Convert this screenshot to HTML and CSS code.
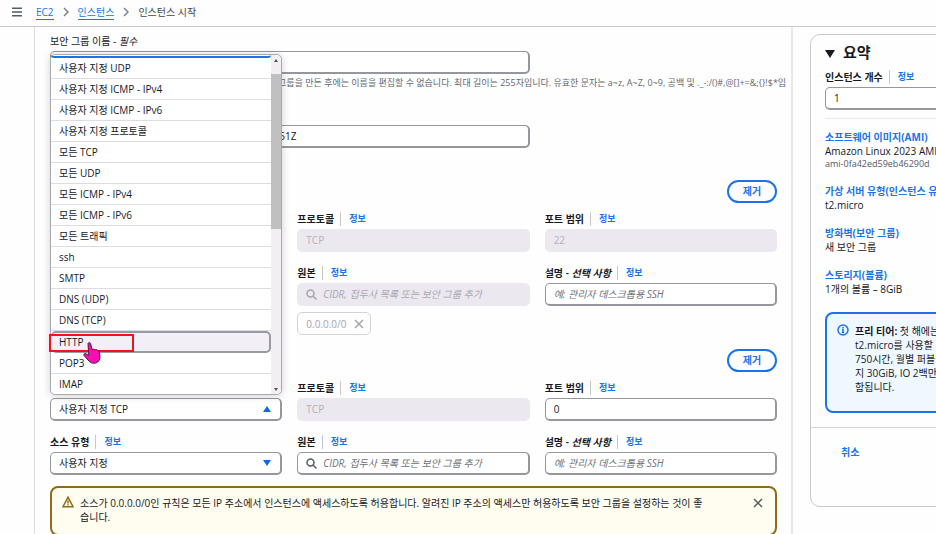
FILE: index.html
```html
<!DOCTYPE html>
<html lang="ko">

<head>
    <meta charset="UTF-8">
    <meta name="viewport" content="width=device-width, initial-scale=1.0">
    <title>인스턴스 시작 | EC2</title>
    <link rel="stylesheet" href="styles.css">
</head>

<body>

    <header class="topbar">
        <button class="menu-btn" aria-label="메뉴">
            <svg width="10" height="10" viewBox="0 0 10 10"><path d="M0 1.200h10M0 5h10M0 8.800h10" /></svg>
        </button>
        <nav class="breadcrumb">
            <a href="#">EC2</a>
            <svg width="6" height="10" viewBox="0 0 6 10"><path d="M1 1l4 4-4 4" /></svg>
            <a href="#">인스턴스</a>
            <svg width="6" height="10" viewBox="0 0 6 10"><path d="M1 1l4 4-4 4" /></svg>
            <span>인스턴스 시작</span>
        </nav>
    </header>

    <div class="layout">
        <div class="side"></div>

        <main class="content">
            <div class="field name-field">
                <div class="label"><label for="sg-name">보안 그룹 이름 - <i>필수</i></label></div>
                <input class="input wide" id="sg-name" type="text">
                <p class="hint">이 보안 그룹은 모든 네트워크 인터페이스에 추가됩니다. 보안 그룹을 만든 후에는 이름을 편집할 수 없습니다. 최대 길이는 255자입니다. 유효한 문자는 a~z, A~Z, 0~9, 공백 및 ._-:/()#,@[]+=&amp;;{}!$*입</p>
            </div>
            <div class="field desc-field">
                <div class="label covered"><label for="sg-desc">설명 - <i>필수</i></label></div>
                <input class="input wide" id="sg-desc" type="text" value="launch-wizard-1 created 2024-08-25T06:39:51.551Z">
            </div>

            <!-- 규칙 1 -->
            <section class="rule">
                <div class="rule-head"><button class="btn">제거</button></div>
                <div class="grid">
                    <div class="field covered">
                        <div class="label"><label for="type1">유형</label><a href="#">정보</a></div>
                        <select class="input" id="type1" disabled><option>ssh</option></select>
                    </div>
                    <div class="field">
                        <div class="label"><label for="proto1">프로토콜</label><a href="#">정보</a></div>
                        <input class="input" id="proto1" type="text" value="TCP" disabled>
                    </div>
                    <div class="field">
                        <div class="label"><label for="port1">포트 범위</label><a href="#">정보</a></div>
                        <input class="input" id="port1" type="text" value="22" disabled>
                    </div>
                    <div class="field covered">
                        <div class="label"><label for="src-type1">소스 유형</label><a href="#">정보</a></div>
                        <select class="input" id="src-type1"><option>위치 무관</option></select>
                    </div>
                    <div class="field">
                        <div class="label"><label for="src1">원본</label><a href="#">정보</a></div>
                        <div class="control search">
                            <svg class="search-icon" width="11" height="11" viewBox="0 0 11 11"><circle cx="4.5" cy="4.5" r="3.5" /><path d="M7 7l3.500 3.500" /></svg>
                            <input class="input" id="src1" type="text" placeholder="CIDR, 접두사 목록 또는 보안 그룹 추가" disabled>
                        </div>
                        <div class="token">0.0.0.0/0
                            <button aria-label="0.0.0.0/0 제거" disabled><svg width="10" height="10" viewBox="0 0 10 10"><path d="M1 1l8 8M9 1l-8 8" /></svg></button>
                        </div>
                    </div>
                    <div class="field">
                        <div class="label"><label for="desc1">설명 - <i>선택 사항</i></label><a href="#">정보</a></div>
                        <input class="input" id="desc1" type="text" placeholder="예: 관리자 데스크톱용 SSH">
                    </div>
                </div>
            </section>

            <!-- 규칙 2 -->
            <section class="rule">
                <div class="rule-head"><button class="btn">제거</button></div>
                <div class="grid">
                    <div class="field">
                        <div class="label covered"><label for="type2">유형</label><a href="#">정보</a></div>
                        <div class="control">
                            <select class="input" id="type2"><option>사용자 지정 TCP</option></select>
                            <svg class="arrow" width="8" height="6" viewBox="0 0 8 6"><path d="M4 0l4 6H0z" /></svg>
                            <div class="dropdown">
                                <ul class="options" role="listbox" aria-label="유형">
                                    <li class="current"></li>
                                    <li role="option">사용자 지정 UDP</li>
                                    <li role="option">사용자 지정 ICMP - IPv4</li>
                                    <li role="option">사용자 지정 ICMP - IPv6</li>
                                    <li role="option">사용자 지정 프로토콜</li>
                                    <li role="option">모든 TCP</li>
                                    <li role="option">모든 UDP</li>
                                    <li role="option">모든 ICMP - IPv4</li>
                                    <li role="option">모든 ICMP - IPv6</li>
                                    <li role="option">모든 트래픽</li>
                                    <li role="option">ssh</li>
                                    <li role="option">SMTP</li>
                                    <li role="option">DNS (UDP)</li>
                                    <li role="option">DNS (TCP)</li>
                                    <li role="option" class="hover">HTTP
                                        <span class="mark"></span>
                                        <svg class="hand" width="18" height="22" viewBox="0 0 18 22"><path d="M5 1.500C5.200 .4 7.300.3 7.600 1.500L9 7.600l1.500-.5 1.800.7 1.500-.2 1.200 1.200 1.300.5.700 5.500c0 3-1.500 5.700-4.500 6.300-3 .4-5-.2-6.500-2L1 13.500c-.8-1.500.8-2.500 2-1.700l2.800 1.700z" /></svg>
                                    </li>
                                    <li role="option">POP3</li>
                                    <li role="option">IMAP</li>
                                </ul>
                                <div class="scrollbar">
                                    <svg width="4" height="3" viewBox="0 0 4 3"><path d="M2 0l2 3H0z" /></svg>
                                    <div class="thumb"></div>
                                    <svg width="4" height="3" viewBox="0 0 4 3"><path d="M0 0h4L2 3z" /></svg>
                                </div>
                            </div>
                        </div>
                    </div>
                    <div class="field">
                        <div class="label"><label for="proto2">프로토콜</label><a href="#">정보</a></div>
                        <input class="input" id="proto2" type="text" value="TCP" disabled>
                    </div>
                    <div class="field">
                        <div class="label"><label for="port2">포트 범위</label><a href="#">정보</a></div>
                        <input class="input" id="port2" type="text" value="0">
                    </div>
                    <div class="field">
                        <div class="label"><label for="src-type2">소스 유형</label><a href="#">정보</a></div>
                        <div class="control">
                            <select class="input" id="src-type2"><option>사용자 지정</option></select>
                            <svg class="arrow" width="8" height="6" viewBox="0 0 8 6"><path d="M0 0h8L4 6z" /></svg>
                        </div>
                    </div>
                    <div class="field">
                        <div class="label"><label for="src2">원본</label><a href="#">정보</a></div>
                        <div class="control search">
                            <svg class="search-icon" width="11" height="11" viewBox="0 0 11 11"><circle cx="4.5" cy="4.5" r="3.5" /><path d="M7 7l3.500 3.500" /></svg>
                            <input class="input" id="src2" type="text" placeholder="CIDR, 접두사 목록 또는 보안 그룹 추가">
                        </div>
                    </div>
                    <div class="field">
                        <div class="label"><label for="desc2">설명 - <i>선택 사항</i></label><a href="#">정보</a></div>
                        <input class="input" id="desc2" type="text" placeholder="예: 관리자 데스크톱용 SSH">
                    </div>
                </div>
            </section>

            <div class="alert">
                <svg class="warn-icon" width="12" height="12" viewBox="0 0 12 12"><path d="M6 1.200L11 10.700H1z" /><path d="M6 4.500v3M6 8.300v1.200" /></svg>
                <p>소스가 0.0.0.0/0인 규칙은 모든 IP 주소에서 인스턴스에 액세스하도록 허용합니다. 알려진 IP 주소의 액세스만 허용하도록 보안 그룹을 설정하는 것이 좋습니다.</p>
                <button aria-label="닫기"><svg width="10" height="10" viewBox="0 0 10 10"><path d="M1 1l8 8M9 1l-8 8" /></svg></button>
            </div>
        </main>

        <aside class="aside">
            <div class="summary">
                <div class="summary-body">
                    <h2><svg width="10" height="8" viewBox="0 0 10 8"><path d="M0 0h10L5 8z" /></svg>요약</h2>
                    <div class="label"><label for="count">인스턴스 개수</label><a href="#">정보</a></div>
                    <input class="input" id="count" type="text" value="1">
                    <hr>
                    <dl>
                        <dt><a href="#">소프트웨어 이미지(AMI)</a></dt>
                        <dd>Amazon Linux 2023 AMI 2023.5.2...</dd>
                        <dd class="small">ami-0fa42ed59eb46290d</dd>
                        <dt><a href="#">가상 서버 유형(인스턴스 유형)</a></dt>
                        <dd>t2.micro</dd>
                        <dt><a href="#">방화벽(보안 그룹)</a></dt>
                        <dd>새 보안 그룹</dd>
                        <dt><a href="#">스토리지(볼륨)</a></dt>
                        <dd>1개의 볼륨 – 8GiB</dd>
                    </dl>
                    <div class="info">
                        <svg width="12" height="12" viewBox="0 0 12 12"><circle cx="6" cy="6" r="5" /><path d="M6 3v1.300M5 5.500h1v3M4.800 8.500h2.400" /></svg>
                        <p><b>프리 티어:</b> 첫 해에는 월별 프리 티어<br>t2.micro를 사용할 수 없는 리전에서<br>750시간, 월별 퍼블릭 IPv4 주소 사용량<br>지 30GiB, IO 2백만 개, 스냅샷 1GB가 포<br>함됩니다.</p>
                    </div>
                </div>
                <div class="summary-foot"><button>취소</button></div>
            </div>
        </aside>
    </div>

</body>

</html>
```
FILE: styles.css
```css
* {
    box-sizing: border-box;
}

body {
    margin: 0;
    overflow: hidden;
    background: #fefefe;
    color: #16191f;
    font: 10px/14px "Open Sans", "Noto Sans CJK KR", sans-serif;
}

p, h2, dl, dd, ul {
    margin: 0;
    padding: 0;
}

a {
    color: #1a73e8;
    text-decoration: none;
}

button, input, select {
    font: inherit;
    color: inherit;
}

button {
    padding: 0;
    border: 0;
    background: none;
}

svg {
    display: block;
    flex: none;
    fill: none;
    stroke: #545b64;
    stroke-width: 1.5;
}

/* 상단 */
.topbar {
    display: flex;
    align-items: center;
    gap: 14px;
    height: 27px;
    padding: 0 12px 2px;
    border-bottom: 1px solid #c9c9ce;
}

.breadcrumb {
    display: flex;
    align-items: center;
    gap: 9px;
}

.breadcrumb a {
    border-bottom: 1px solid #1a73e8;
}

.breadcrumb span {
    color: #424650;
}

.breadcrumb svg {
    stroke: #7d8088;
}

/* 레이아웃 */
.layout {
    display: grid;
    grid-template-columns: 35px minmax(0, 1fr) 143px;
}

.side {
    border-right: 1px solid #dddde2;
}

.content {
    padding: 7px 14px 20px 15px;
    border-right: 2px solid #e9e9ec;
}

.grid {
    display: grid;
    grid-template-columns: repeat(3, minmax(0, 1fr));
    gap: 14px 15px;
}

/* 열린 메뉴 뒤에 가려지는 항목 */
.covered {
    visibility: hidden;
}

.label {
    display: flex;
    margin-bottom: 3px;
    font-weight: 600;
}

.label a {
    margin-left: 6px;
    padding-left: 8px;
    border-left: 1px solid #c6c6cd;
    font-size: 9px;
}

.name-field label {
    font-weight: 400;
}

.input {
    display: block;
    width: 100%;
    height: 23px;
    padding: 0 8px;
    border: 2px solid #96969e;
    border-width: 1px 2px 2px 1px;
    border-radius: 5px;
    background: #fff;
    appearance: none;
    outline: none;
}

.input:disabled {
    border-color: #ebe8f0;
    background: #ebe8f0;
    color: #b4b1bb;
    opacity: 1;
}

.input::placeholder {
    color: #6d7078;
    font-style: italic;
    opacity: 1;
}

.input:disabled::placeholder {
    color: #aaa7b2;
}

.wide {
    width: 66%;
}

.hint {
    height: 26px;
    margin-top: 2px;
    color: #656871;
    font-size: 9px;
    line-height: 13px;
    white-space: nowrap;
}

.desc-field {
    margin-top: 6px;
}

.desc-field + .rule {
    margin-top: 32px;
}

.rule {
    margin-top: 14px;
}

.rule-head {
    display: flex;
    justify-content: flex-end;
    margin-bottom: 9px;
}

.btn {
    width: 50px;
    height: 23px;
    border: 2px solid #1a73e8;
    border-radius: 12px;
    color: #1a73e8;
    font-weight: 700;
    line-height: 17px;
}

.control {
    position: relative;
}

.search .input {
    padding-left: 25px;
}

.search-icon {
    position: absolute;
    top: 6px;
    left: 9px;
}

.search:has(:disabled) svg,
.token svg {
    stroke: #a5a5ad;
}

.arrow {
    position: absolute;
    top: 8px;
    right: 11px;
    fill: #0b6be0;
    stroke: none;
}

.token {
    display: inline-flex;
    align-items: center;
    gap: 8px;
    height: 23px;
    margin-top: 6px;
    padding: 0 6px 0 8px;
    border: 1px solid #d5d3da;
    border-radius: 5px;
    color: #a5a5ad;
}

/* 유형 드롭다운 */
.dropdown {
    position: absolute;
    z-index: 2;
    right: 0;
    bottom: calc(100% + 3px);
    left: 0;
    display: flex;
    height: 341px;
    border: 1px solid #a9a9b0;
    border-radius: 5px;
    background: #fff;
    box-shadow: 0 1px 8px rgba(0, 7, 22, 0.18);
}

.options {
    flex: 1;
    list-style: none;
}

.options li {
    height: 21px;
    padding: 3px 8px;
    border-bottom: 1px solid #dcdce2;
}

.options .current {
    height: 3px;
    padding: 0;
    border-bottom: 2px solid #1a73e8;
    border-radius: 0 0 5px 5px;
}

.options .hover {
    position: relative;
    height: 22px;
    padding-top: 2px;
    border: 2px solid #9a9aa2;
    border-left-width: 0;
    border-radius: 5px;
    background: #f2eff6;
}

.options li:last-child {
    border: 0;
}

.mark {
    position: absolute;
    top: 1px;
    left: -2px;
    width: 85px;
    height: 18px;
    border: 2px solid #f5101a;
}

.hand {
    position: absolute;
    z-index: 1;
    top: 9px;
    left: 32px;
    fill: #f80fb2;
    stroke: #4a1a45;
    stroke-width: 1;
}

.scrollbar {
    display: flex;
    flex-direction: column;
    align-items: center;
    width: 10px;
    padding: 4px 0 3px;
    border-radius: 0 5px 5px 0;
    background: #f2eff2;
}

.scrollbar svg {
    fill: #505050;
    stroke: none;
}

.thumb {
    width: 100%;
    height: 155px;
    margin: 12px 0 auto;
    background: #c1c0c1;
}

/* 알림 */
.alert {
    display: flex;
    align-items: flex-start;
    gap: 6px;
    min-height: 50px;
    margin-top: 11px;
    padding: 8px 12px 9px 10px;
    border: 2px solid #906c16;
    border-radius: 8px;
    background: #fffdf0;
}

.alert p {
    flex: 1;
    padding-right: 40px;
    word-break: break-all;
}

.alert button {
    margin-top: 2px;
}

.warn-icon {
    stroke: #906c16;
}

/* 요약 */
.aside {
    padding: 7px 0 0 17px;
    overflow: hidden;
    white-space: nowrap;
}

.summary {
    width: 240px;
    border: 1px solid #c9c9ce;
    border-radius: 10px;
}

.summary-body {
    padding: 8px 14px 14px;
    border-bottom: 1px solid #d5d5da;
}

.summary h2 {
    display: flex;
    align-items: center;
    gap: 8px;
    margin-bottom: 8px;
    font-size: 15px;
    line-height: 19px;
}

.summary h2 svg {
    margin-top: 3px;
    fill: #16191f;
    stroke: none;
}

.summary hr {
    margin: 8px 0 11px;
    border: 0;
    border-top: 1px solid #e9e9ec;
}

.summary dt {
    margin-top: 14px;
    font-weight: 700;
}

.summary dt:first-child {
    margin-top: 0;
}

.summary .small {
    font-size: 9px;
    line-height: 12px;
    color: #545b64;
}

.info {
    display: flex;
    gap: 6px;
    min-height: 101px;
    margin-top: 16px;
    padding: 10px;
    border: 2px solid #1a73e8;
    border-radius: 8px;
    background: #f0f8ff;
}

.info svg {
    stroke: #1a73e8;
}

.summary-foot {
    height: 78px;
    padding: 17px 30px;
}

.summary-foot button {
    color: #1a73e8;
    font-weight: 700;
}
```
